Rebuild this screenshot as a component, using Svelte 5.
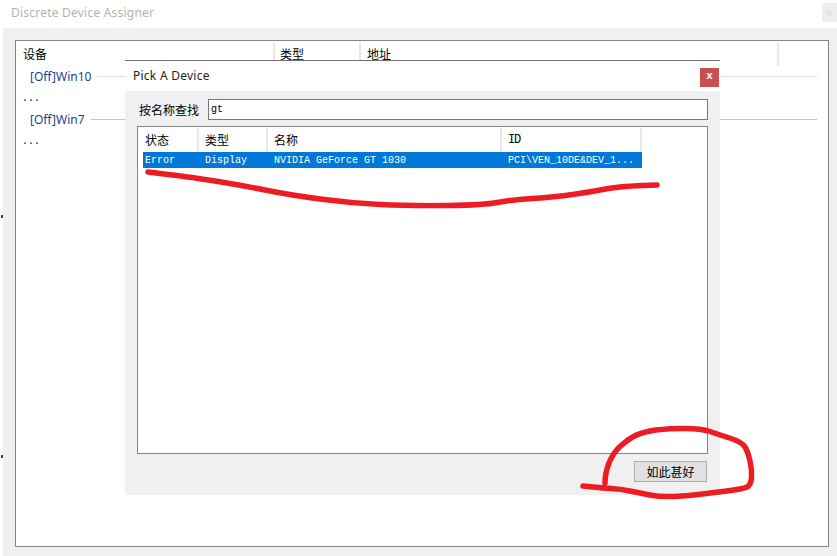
<script>
  const treeRows = [
    { name: "[Off]Win10", line: "#d6ddf0" },
    { name: "[Off]Win7", line: "#b9c3dd" }
  ];

  const columns = [
    { title: "状态", width: 56, value: "Error" },
    { title: "类型", width: 69, value: "Display" },
    { title: "名称", width: 234, value: "NVIDIA GeForce GT 1030" },
    { title: "ID", width: 140, value: "PCI\\VEN_10DE&DEV_1...", mono: true }
  ];

  // the red marker strokes somebody drew over the screenshot
  const underline = [[148,172],[190,177],[240,185],[290,195],[350,203],[410,206],[485,205],[510,200],[555,197],[590,192],[610,188],[630,186],[657,185]];
  const circle = [[605,483],[605,473],[613,453],[627,440],[640,433],[660,429],[700,428],[720,435],[742,442],[748,452],[752,470],[751,485],[743,489],[710,493],[687,496],[660,497],[640,493],[620,489],[603,488],[583,486]];

  function smooth(pts) {
    let d = `M${pts[0][0]} ${pts[0][1]}`;
    for (let i = 1; i < pts.length - 1; i++) {
      const mx = (pts[i][0] + pts[i + 1][0]) / 2;
      const my = (pts[i][1] + pts[i + 1][1]) / 2;
      d += ` Q${pts[i][0]} ${pts[i][1]} ${mx} ${my}`;
    }
    const last = pts[pts.length - 1];
    return d + ` L${last[0]} ${last[1]}`;
  }
</script>

<div class="window">
  <div class="titlebar">
    <span class="app-title">Discrete Device Assigner</span>
    <span class="app-close">x</span>
  </div>
  <div class="body">
    <div class="device-list">
      <div class="device-head">
        <span class="dh dh-device">设备</span>
        <span class="dh dh-type">类型</span>
        <span class="dh dh-addr">地址</span>
        <span class="dh dh-rest"></span>
      </div>
      {#each treeRows as row}
        <div class="tree-row">
          <span class="tree-name">{row.name}</span>
          <span class="tree-line" style="background: {row.line}"></span>
        </div>
        <div class="tree-more">...</div>
      {/each}
    </div>
  </div>

  <div class="modal">
    <div class="modal-title">
      <span class="modal-name">Pick A Device</span>
      <span class="modal-close">x</span>
    </div>
    <div class="modal-body">
      <div class="search">
        <span class="search-label">按名称查找</span>
        <div class="search-input">gt</div>
      </div>
      <div class="result-list">
        <div class="result-head">
          {#each columns as col}
            <span class="rh" class:mono={col.mono} style="width: {col.width}px">{col.title}</span>
          {/each}
        </div>
        <div class="result-row">
          {#each columns as col}
            <span class="rc" style="width: {col.width}px">{col.value}</span>
          {/each}
        </div>
      </div>
      <div class="modal-foot">
        <button class="ok">如此甚好</button>
      </div>
    </div>
  </div>

  <svg class="marker" width="837" height="556" viewBox="0 0 837 556">
    <path d={smooth(underline)} />
    <path d={smooth(circle)} />
  </svg>

  <i class="tick tick-a"></i>
  <i class="tick tick-b"></i>
</div>

<style>
  :global(body) {
    margin: 0;
    background: #fff;
  }

  .window {
    position: relative;
    width: 837px;
    height: 556px;
    overflow: hidden;
    display: flex;
    flex-direction: column;
    background: #fff;
    font-family: "Noto Sans", "Noto Sans CJK SC", sans-serif;
    font-size: 12px;
    color: #000;
  }

  .titlebar {
    height: 28px;
    flex-shrink: 0;
    display: flex;
    align-items: center;
    justify-content: space-between;
    padding-left: 11px;
    box-sizing: border-box;
  }

  .app-title {
    color: #b9b2a8;
    font-size: 12px;
    letter-spacing: 0.22px;
    margin-top: -3px;
  }

  .app-close {
    width: 15px;
    height: 19px;
    margin-top: -4px;
    background: #eeeeee;
    color: #e2e2e2;
    font-size: 11px;
    font-weight: 700;
    text-align: center;
    line-height: 18px;
  }

  .body {
    flex: 1;
    margin-left: 3px;
    background: #f0f0f0;
    padding: 12px 8px 9px 12px;
    display: flex;
    min-height: 0;
  }

  .device-list {
    flex: 1;
    background: #fff;
    border: 1px solid #84858c;
    box-sizing: border-box;
    padding-top: 1px;
  }

  .device-head {
    display: flex;
    height: 24px;
    font-family: "Noto Sans CJK SC", sans-serif;
  }

  .dh {
    box-sizing: border-box;
    padding-left: 7px;
    line-height: 24px;
    border-right: 2px solid #e8e8e8;
  }

  .dh-device { width: 259px; }
  .dh-type { width: 86px; padding-left: 5px; }
  .dh-addr { width: 418px; padding-left: 6px; }
  .dh-rest { border-right: none; }

  .tree-row {
    display: flex;
    align-items: center;
    height: 22px;
    padding-left: 14px;
    padding-right: 11px;
    gap: 6px;
    color: #1c3f94;
  }

  .device-head + .tree-row {
    margin-top: -1px;
  }

  .tree-name {
    white-space: nowrap;
  }

  .tree-line {
    flex: 1;
    height: 1px;
  }

  .tree-more {
    height: 21px;
    line-height: 23px;
    padding-left: 6px;
    font-family: "Liberation Mono", monospace;
    font-size: 10px;
  }

  .modal {
    position: absolute;
    left: 125px;
    top: 60px;
    width: 595px;
    height: 435px;
    box-sizing: border-box;
    border-top: 1px solid #6f7074;
    display: flex;
    flex-direction: column;
    background: #fff;
  }

  .modal-title {
    height: 30px;
    flex-shrink: 0;
    display: flex;
    align-items: center;
    justify-content: space-between;
    padding-left: 8px;
    padding-right: 1px;
    color: #222;
  }

  .modal-name {
    letter-spacing: 0.25px;
    margin-top: -2px;
  }

  .modal-close {
    width: 19px;
    height: 19px;
    margin-top: 3px;
    background: #c75050;
    color: #fff;
    font-family: "Liberation Mono", monospace;
    font-weight: 700;
    font-size: 11px;
    text-align: center;
    line-height: 17px;
  }

  .modal-body {
    flex: 1;
    background: #f0f0f0;
    padding: 8px 12px 13px 12px;
    display: flex;
    flex-direction: column;
    min-height: 0;
  }

  .search {
    display: flex;
    align-items: center;
    height: 21px;
    gap: 10px;
    padding-left: 2px;
    font-family: "Noto Sans CJK SC", sans-serif;
  }

  .search-label {
    width: 59px;
    flex-shrink: 0;
    white-space: nowrap;
  }

  .search-input {
    flex: 1;
    height: 21px;
    box-sizing: border-box;
    background: #fff;
    border: 1px solid #77787c;
    padding-left: 2px;
    line-height: 20px;
    font-family: "Liberation Mono", monospace;
    font-size: 10px;
  }

  .result-list {
    flex: 1;
    margin-top: 6px;
    background: #fff;
    border: 1px solid #84858c;
    box-sizing: border-box;
    padding: 1px 0 0 5px;
    min-height: 0;
  }

  .result-head {
    display: flex;
    height: 24px;
    font-family: "Noto Sans CJK SC", sans-serif;
  }

  .rh {
    box-sizing: border-box;
    padding-left: 2px;
    line-height: 24px;
    border-right: 2px solid #e8e8e8;
  }

  .rh:nth-child(n + 2) {
    padding-left: 6px;
  }

  .rh.mono {
    font-family: "Liberation Mono", monospace;
    letter-spacing: -1.2px;
  }

  .result-row {
    display: flex;
    width: 499px;
    height: 16px;
    background: #0078d7;
    color: #fff;
    font-family: "Liberation Mono", monospace;
    font-size: 10px;
    line-height: 17px;
  }

  .rc {
    box-sizing: border-box;
    padding-left: 2px;
    white-space: nowrap;
  }

  .rc:nth-child(n + 2) {
    padding-left: 6px;
  }

  .modal-foot {
    display: flex;
    justify-content: flex-end;
    padding-top: 7px;
    padding-right: 1px;
  }

  .ok {
    width: 73px;
    height: 21px;
    padding: 0;
    box-sizing: border-box;
    background: #e1e1e1;
    border: 1px solid #adadad;
    font-family: "Noto Sans CJK SC", sans-serif;
    font-size: 12px;
    color: #000;
    line-height: 18px;
  }

  .marker {
    position: absolute;
    inset: 0;
    pointer-events: none;
  }

  .marker path {
    fill: none;
    stroke: #ed1c24;
    stroke-width: 5.5;
    stroke-linecap: round;
    stroke-linejoin: round;
  }

  .tick {
    position: absolute;
    left: 1px;
    width: 2px;
    height: 3px;
    background: #444;
  }

  .tick-a { top: 215px; }
  .tick-b { top: 455px; }
</style>
